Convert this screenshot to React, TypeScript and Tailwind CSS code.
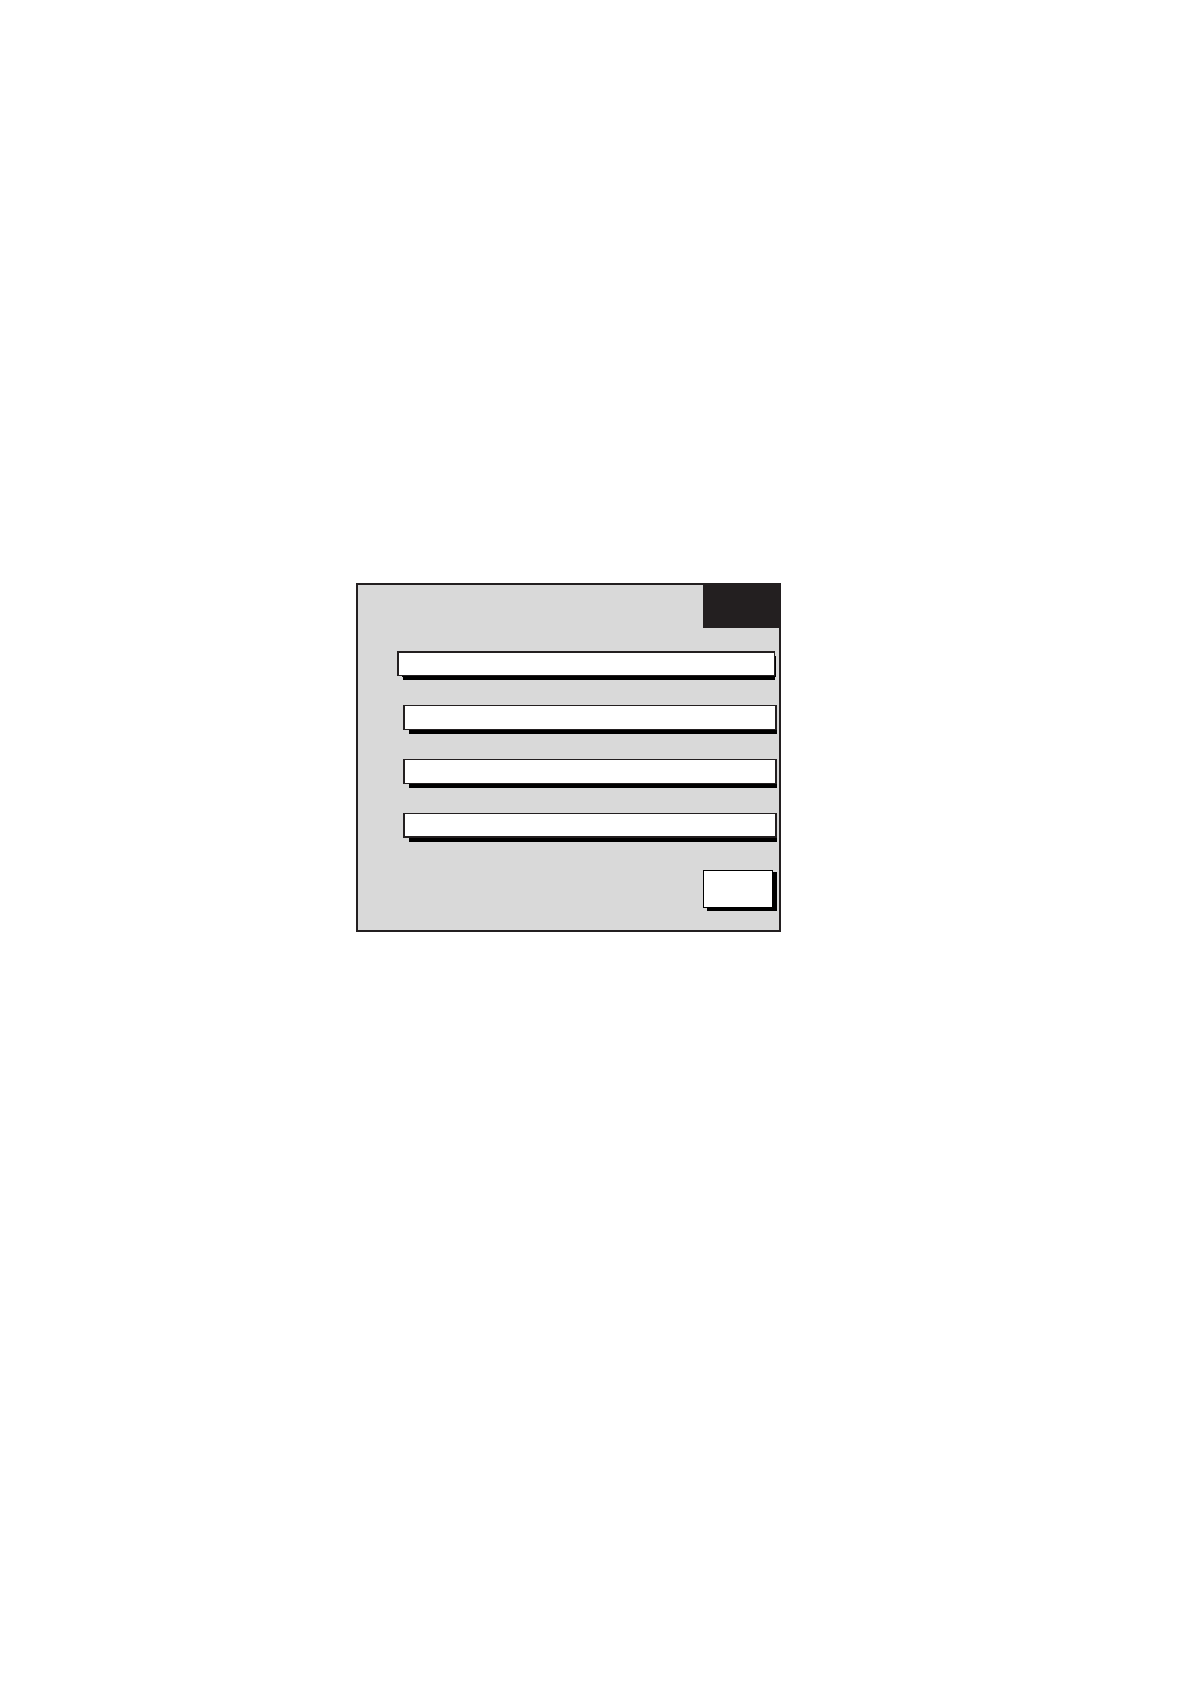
type Field = { name: string; className: string };

const fields: Field[] = [
  {
    name: "Line 1",
    className:
      "ml-[39px] mr-1 border-t-2 border-l-2 border-r border-b shadow-[3px_7px_0_-3px_#000,3px_3px_0_-2px_#000]",
  },
  {
    name: "Line 2",
    className: "ml-[45px] mr-0.5 border-t border-x-2 border-b shadow-[3px_7px_0_-3px_#000]",
  },
  {
    name: "Line 3",
    className: "ml-[45px] mr-0.5 border-t border-x-2 border-b shadow-[3px_7px_0_-3px_#000]",
  },
  {
    name: "Line 4",
    className: "ml-[45px] mr-0.5 border-t border-x-2 border-b-2 shadow-[3px_7px_0_-3px_#000]",
  },
];

export default function App() {
  return (
    <main className="grid min-h-screen grid-cols-[356fr_425fr_409fr] items-start bg-white pt-[583px] font-['Liberation_Sans',sans-serif]">
      <form
        className="col-start-2 flex flex-col border-2 border-[#231f20] bg-[#d9d9d9] pb-[22px]"
        onSubmit={(event) => event.preventDefault()}
      >
        <header className="flex justify-end">
          <div className="h-[43px] w-[76px] bg-[#231f20]" />
        </header>
        <div className="mt-[23px] flex flex-col gap-[29px]">
          {fields.map((field) => (
            <div key={field.name} className="flex">
              <input
                type="text"
                aria-label={field.name}
                className={`h-[25px] min-w-0 flex-1 rounded-none border-[#231f20] bg-white px-2 text-sm outline-none ${field.className}`}
              />
            </div>
          ))}
        </div>
        <button
          type="submit"
          aria-label="Confirm"
          className="mt-8 mr-1.5 h-[38px] w-[70px] self-end border border-black bg-white shadow-[4px_3px_0_#000,4px_2px_0_#000]"
        />
      </form>
    </main>
  );
}
